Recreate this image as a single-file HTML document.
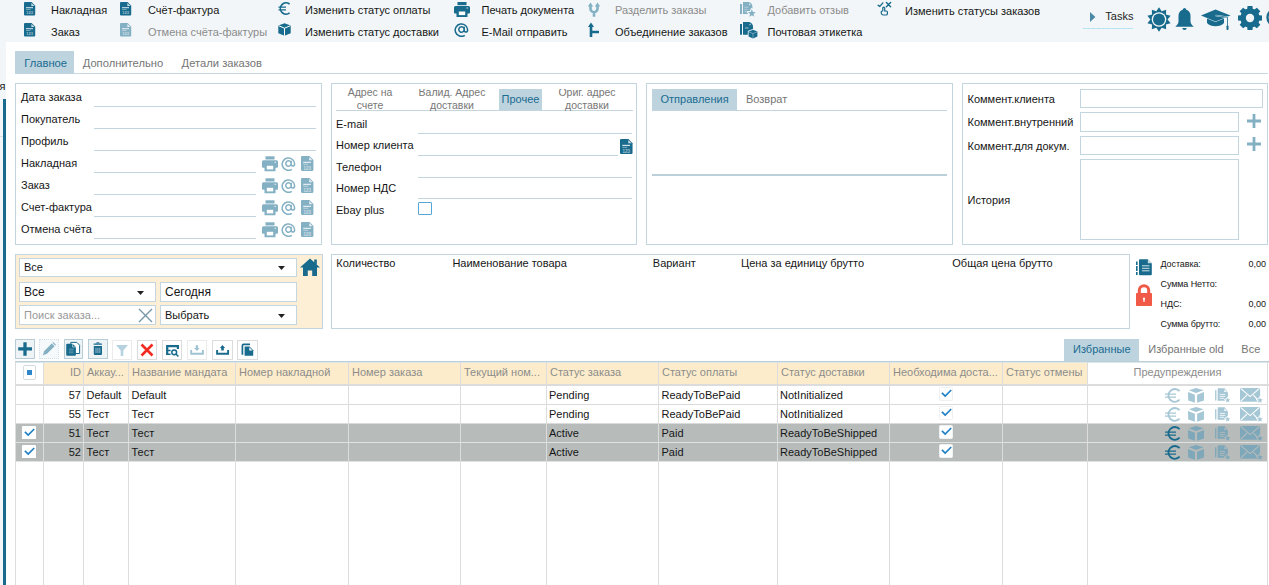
<!DOCTYPE html><html><head><meta charset="utf-8"><style>
html,body{margin:0;padding:0;}
body{width:1269px;height:585px;overflow:hidden;position:relative;background:#f2f6f8;font-family:"Liberation Sans",sans-serif;}
.t{position:absolute;white-space:nowrap;}
svg{display:block;}
</style></head><body><svg style="position:absolute;left:24px;top:1.8px" width="12" height="14" viewBox="0 0 12 14"><path d="M1 0H7.6L11.2 3.7V12.5a1 1 0 0 1-1 1H1a1 1 0 0 1-1-1V1a1 1 0 0 1 1-1z" fill="#186b8d"/><path d="M7.4 0.9V3.9H10.4z" fill="#fff" opacity="0.8"/><rect x="2" y="5.2" width="7" height="1" fill="#fff" opacity="0.85"/><rect x="2" y="7" width="4.5" height="0.8" fill="#fff" opacity="0.5"/><text x="5.6" y="12.3" font-size="4" font-family="Liberation Sans" font-weight="bold" fill="#fff" fill-opacity="0.6" text-anchor="middle">123</text></svg><div class="t" style="left:51px;top:4.69px;font-size:11px;line-height:11px;color:#161616;">Накладная</div><svg style="position:absolute;left:24px;top:23px" width="12" height="14" viewBox="0 0 12 14"><path d="M1 0H7.6L11.2 3.7V12.5a1 1 0 0 1-1 1H1a1 1 0 0 1-1-1V1a1 1 0 0 1 1-1z" fill="#186b8d"/><path d="M7.4 0.9V3.9H10.4z" fill="#fff" opacity="0.8"/><rect x="2" y="5.2" width="7" height="1" fill="#fff" opacity="0.85"/><rect x="2" y="7" width="4.5" height="0.8" fill="#fff" opacity="0.5"/><text x="5.6" y="12.3" font-size="4" font-family="Liberation Sans" font-weight="bold" fill="#fff" fill-opacity="0.6" text-anchor="middle">123</text></svg><div class="t" style="left:51px;top:27.19px;font-size:11px;line-height:11px;color:#161616;">Заказ</div><svg style="position:absolute;left:120px;top:2px" width="12" height="14" viewBox="0 0 12 14"><path d="M1 0H7.6L11.2 3.7V12.5a1 1 0 0 1-1 1H1a1 1 0 0 1-1-1V1a1 1 0 0 1 1-1z" fill="#186b8d"/><path d="M7.4 0.9V3.9H10.4z" fill="#fff" opacity="0.8"/><rect x="2" y="5.2" width="7" height="1" fill="#fff" opacity="0.85"/><rect x="2" y="7" width="4.5" height="0.8" fill="#fff" opacity="0.5"/><text x="5.6" y="12.3" font-size="4" font-family="Liberation Sans" font-weight="bold" fill="#fff" fill-opacity="0.6" text-anchor="middle">123</text></svg><div class="t" style="left:148px;top:4.69px;font-size:11px;line-height:11px;color:#161616;">Счёт-фактура</div><svg style="position:absolute;left:120px;top:23px" width="12" height="14" viewBox="0 0 12 14"><path d="M1 0H7.6L11.2 3.7V12.5a1 1 0 0 1-1 1H1a1 1 0 0 1-1-1V1a1 1 0 0 1 1-1z" fill="#84b0c4"/><path d="M7.4 0.9V3.9H10.4z" fill="#fff" opacity="0.8"/><rect x="2" y="5.2" width="7" height="1" fill="#fff" opacity="0.85"/><rect x="2" y="7" width="4.5" height="0.8" fill="#fff" opacity="0.5"/><text x="5.6" y="12.3" font-size="4" font-family="Liberation Sans" font-weight="bold" fill="#fff" fill-opacity="0.6" text-anchor="middle">123</text></svg><div class="t" style="left:148px;top:27.19px;font-size:11px;line-height:11px;color:#8c8c8c;">Отмена счёта-фактуры</div><svg style="position:absolute;left:278px;top:2px" width="13" height="13" viewBox="0 0 13 13"><path d="M11.6 2.2A5.6 5.6 0 1 0 11.6 10.8" fill="none" stroke="#186b8d" stroke-width="1.6"/><path d="M0.5 5.2h7.5M0.5 7.8h7.5" stroke="#186b8d" stroke-width="1.3"/></svg><div class="t" style="left:305px;top:4.69px;font-size:11px;line-height:11px;color:#161616;">Изменить статус оплаты</div><svg style="position:absolute;left:278px;top:23px" width="13" height="13" viewBox="0 0 13 13"><path d="M6.5 0.3L12.7 2.6V10.3L6.5 12.8L0.3 10.3V2.6Z" fill="#186b8d"/><path d="M0.6 2.7L6.5 5.2L12.4 2.7M6.5 5.2V12.8" fill="none" stroke="#fff" stroke-width="1"/></svg><div class="t" style="left:305px;top:27.19px;font-size:11px;line-height:11px;color:#161616;">Изменить статус доставки</div><svg style="position:absolute;left:454px;top:2px" width="16" height="15" viewBox="0 0 16 15"><rect x="3.5" y="0" width="9" height="3.2" fill="#186b8d"/><path d="M1.5 4h13a1.5 1.5 0 0 1 1.5 1.5v5a1 1 0 0 1-1 1h-1.5v3.5h-11v-3.5h-1.5a1 1 0 0 1-1-1v-5a1.5 1.5 0 0 1 1.5-1.5z" fill="#186b8d"/><rect x="4.8" y="9.5" width="6.4" height="3.6" fill="#fff"/><rect x="12.5" y="5.5" width="1.6" height="1" fill="#fff" opacity="0.8"/></svg><div class="t" style="left:481.5px;top:4.69px;font-size:11px;line-height:11px;color:#161616;">Печать документа</div><svg style="position:absolute;left:454px;top:22px" width="15" height="15" viewBox="0 0 15 15"><path d="M10.2 7.5a2.7 2.7 0 1 1 0-0.1 M10.2 4.8v3.4a1.7 1.7 0 0 0 3.4 0.2A6.2 6.2 0 1 0 10.8 13.3" fill="none" stroke="#186b8d" stroke-width="1.5"/></svg><div class="t" style="left:481.5px;top:27.19px;font-size:11px;line-height:11px;color:#161616;">E-Mail отправить</div><svg style="position:absolute;left:588px;top:2px" width="12" height="15" viewBox="0 0 12 15"><path d="M2.5 3.8v2.9a3.5 3.5 0 0 0 3.5 3.5a3.5 3.5 0 0 0 3.5-3.5v-2.9M6 9.5v5.3" fill="none" stroke="#84b0c4" stroke-width="2.6"/><path d="M-0.2 4.6L2.5 0.5L5.2 4.6ZM6.8 4.6L9.5 0.5L12.2 4.6Z" fill="#84b0c4"/></svg><div class="t" style="left:615px;top:4.69px;font-size:11px;line-height:11px;color:#8c8c8c;">Разделить заказы</div><svg style="position:absolute;left:588px;top:22px" width="11" height="15" viewBox="0 0 11 15"><path d="M3 4v11M3 10h8" fill="none" stroke="#186b8d" stroke-width="2.6"/><path d="M0 5L3 0.5L6 5Z" fill="#186b8d"/></svg><div class="t" style="left:615px;top:27.19px;font-size:11px;line-height:11px;color:#161616;">Объединение заказов</div><svg style="position:absolute;left:738px;top:0px" width="20" height="20" viewBox="0 0 20 20"><rect x="2" y="4" width="2" height="10" fill="#84b0c4"/><path d="M5 2H11.2Q14.4 3.6 14.4 6V14H5Z" fill="#84b0c4"/><circle cx="11.6" cy="4.4" r="0.8" fill="#fff" opacity="0.7"/><path d="M6.3 7.3h4M6.3 9.4h3M6.3 11.5h2.5" stroke="#fff" stroke-width="0.8" opacity="0.45"/><polygon points="13.85,9.30 14.93,11.91 17.75,12.13 15.60,13.97 16.26,16.72 13.85,15.25 11.44,16.72 12.10,13.97 9.95,12.13 12.77,11.91" fill="#f2f6f8" stroke="#f2f6f8" stroke-width="2.4" stroke-linejoin="round"/><polygon points="13.85,9.30 14.93,11.91 17.75,12.13 15.60,13.97 16.26,16.72 13.85,15.25 11.44,16.72 12.10,13.97 9.95,12.13 12.77,11.91" fill="#84b0c4"/></svg><div class="t" style="left:767.5px;top:4.69px;font-size:11px;line-height:11px;color:#8c8c8c;">Добавить отзыв</div><svg style="position:absolute;left:738px;top:20px" width="20" height="20" viewBox="0 0 20 20"><rect x="2" y="4" width="2" height="10.7" fill="#186b8d"/><path d="M5 2H11.5Q15 3.6 15 6.5V14.7H5Z" fill="#186b8d"/><circle cx="12" cy="4.6" r="0.8" fill="#fff" opacity="0.6"/><rect x="7" y="7.2" width="3.6" height="1.6" fill="#fff" opacity="0.35"/><path d="M15 9.8L19.4 11.6V16.6L15 18.6L10.6 16.6V11.6Z" fill="#186b8d" stroke="#f2f6f8" stroke-width="1.6" stroke-linejoin="round"/><path d="M15 9.8L19.4 11.6V16.6L15 18.6L10.6 16.6V11.6Z" fill="#186b8d"/><path d="M10.8 11.8L15 13.6L19.2 11.8M15 13.6V18.5" fill="none" stroke="#fff" stroke-width="0.6" opacity="0.6"/></svg><div class="t" style="left:767.5px;top:27.19px;font-size:11px;line-height:11px;color:#161616;">Почтовая этикетка</div><svg style="position:absolute;left:875px;top:0px" width="20" height="20" viewBox="0 0 20 20"><path d="M3.2 5.3L4.8 6.4L7.9 2.9" fill="none" stroke="#186b8d" stroke-width="1.4" stroke-linecap="round"/><path d="M11.4 2.5L15.6 6.7M15.6 2.5L11.4 6.7" fill="none" stroke="#186b8d" stroke-width="1.4" stroke-linecap="round"/><path d="M7.8 11.2V8a0.95 0.95 0 0 1 1.9 0V11H11.3a1.1 1.1 0 0 1 1.1 1.1V13.8a1.2 1.2 0 0 1-1.2 1.2H8.4a2.2 2.2 0 0 1-2.2-2.2V12.4a1.1 1.1 0 0 1 1.6-1.2" fill="none" stroke="#186b8d" stroke-width="1.2"/></svg><div class="t" style="left:905px;top:5.69px;font-size:11px;line-height:11px;color:#161616;">Изменить статусы заказов</div><svg style="position:absolute;left:1089.7px;top:12px" width="6" height="10" viewBox="0 0 6 10"><path d="M0 0L5.4 5L0 10Z" fill="#4a8aa6"/></svg><div class="t" style="left:1105.3px;top:10.89px;font-size:11px;line-height:11px;color:#1f1f1f;">Tasks</div><div style="position:absolute;left:1083px;top:28px;width:50px;height:1px;background:repeating-linear-gradient(90deg,#b9d9e3 0 1px,#b8e8f8 1px 5px)"></div><svg style="position:absolute;left:1146.5px;top:6.5px" width="24" height="25" viewBox="0 0 24 25"><polygon points="12.00,0.30 14.66,4.32 19.17,2.63 18.96,7.45 23.60,8.73 20.60,12.50 23.60,16.27 18.96,17.55 19.17,22.37 14.66,20.68 12.00,24.70 9.34,20.68 4.83,22.37 5.04,17.55 0.40,16.27 3.40,12.50 0.40,8.73 5.04,7.45 4.83,2.63 9.34,4.32" fill="#186b8d"/><circle cx="12" cy="12.5" r="7.6" fill="#186b8d"/><circle cx="12" cy="12.5" r="7.3" fill="#f2f6f8"/><circle cx="12" cy="12.5" r="6.0" fill="#186b8d"/></svg><svg style="position:absolute;left:1175px;top:8px" width="19" height="22" viewBox="0 0 19 22"><circle cx="9.5" cy="1.6" r="1.6" fill="#186b8d"/><path d="M9.5 1.5c-4 0-6 3-6 6.5v5.5c0 2-1.5 3.5-3.2 5.2h18.4c-1.7-1.7-3.2-3.2-3.2-5.2v-5.5c0-3.5-2-6.5-6-6.5z" fill="#186b8d"/><path d="M7.3 20h4.4a2.2 2 0 0 1-4.4 0z" fill="#186b8d"/></svg><svg style="position:absolute;left:1200.5px;top:9px" width="30" height="21" viewBox="0 0 30 21"><path d="M14.5 0.5L29.5 6.5L14.5 12.5L0 6.5Z" fill="#186b8d"/><path d="M6 9.5v4.5c2 2.5 5 3.2 8.5 3.2s6.5-0.7 8.5-3.2v-4.5l-8.5 3.6z" fill="#186b8d"/><path d="M14.5 6.5L26.5 8.2V17" fill="none" stroke="#f2f6f8" stroke-width="1.6"/><path d="M14.5 6.5L26.5 8.2V17" fill="none" stroke="#186b8d" stroke-width="0.8"/><rect x="25.5" y="16.5" width="2" height="4.5" rx="0.8" fill="#186b8d"/></svg><svg style="position:absolute;left:1238px;top:5.5px" width="24" height="24" viewBox="0 0 24 24"><polygon points="21.08,9.19 24.15,9.54 24.15,14.46 21.08,14.81 20.40,16.43 22.34,18.85 18.85,22.34 16.43,20.40 14.81,21.08 14.46,24.15 9.54,24.15 9.19,21.08 7.57,20.40 5.15,22.34 1.66,18.85 3.60,16.43 2.92,14.81 -0.15,14.46 -0.15,9.54 2.92,9.19 3.60,7.57 1.66,5.15 5.15,1.66 7.57,3.60 9.19,2.92 9.54,-0.15 14.46,-0.15 14.81,2.92 16.43,3.60 18.85,1.66 22.34,5.15 20.40,7.57" fill="#186b8d"/><circle cx="12" cy="12" r="9.6" fill="#186b8d"/><circle cx="12" cy="12" r="4.2" fill="#f2f6f8"/></svg><svg style="position:absolute;left:1266.3px;top:8px" width="3" height="20" viewBox="0 0 3 20"><circle cx="10" cy="9.5" r="8.5" fill="none" stroke="#186b8d" stroke-width="2.4"/></svg><div class="t" style="left:-0.5px;top:80.69px;font-size:11px;line-height:11px;color:#161616;">я</div><div style="position:absolute;left:0px;top:136px;width:6px;height:1px;background:#d8dfe3"></div><div style="position:absolute;left:3px;top:99px;width:3px;height:500px;background:#186b8d"></div><div style="position:absolute;left:6px;top:42px;width:1263px;height:543px;background:#fff"></div><div style="position:absolute;left:15px;top:51px;width:59px;height:23px;background:#bdd3dd"></div><div style="position:absolute;left:74px;top:73px;width:1194px;height:1px;background:#c6d8e0"></div><div class="t" style="left:24.3px;top:57.52px;font-size:11.2px;line-height:11.2px;color:#1a6b92;">Главное</div><div class="t" style="left:82.7px;top:57.52px;font-size:11.2px;line-height:11.2px;color:#757575;">Дополнительно</div><div class="t" style="left:181.6px;top:57.52px;font-size:11.2px;line-height:11.2px;color:#757575;">Детали заказов</div><div style="position:absolute;left:15px;top:83px;width:307px;height:162px;box-sizing:border-box;border:1px solid #c3d6df;background:#fff"></div><div class="t" style="left:21px;top:92.19px;font-size:11px;line-height:11px;color:#161616;">Дата заказа</div><div style="position:absolute;left:94px;top:106px;width:222px;height:1px;background:#c3d6df"></div><div class="t" style="left:21px;top:114.19px;font-size:11px;line-height:11px;color:#161616;">Покупатель</div><div style="position:absolute;left:94px;top:128px;width:222px;height:1px;background:#c3d6df"></div><div class="t" style="left:21px;top:136.19px;font-size:11px;line-height:11px;color:#161616;">Профиль</div><div style="position:absolute;left:94px;top:150px;width:222px;height:1px;background:#c3d6df"></div><div class="t" style="left:21px;top:158.19px;font-size:11px;line-height:11px;color:#161616;">Накладная</div><div style="position:absolute;left:94px;top:172px;width:162px;height:1px;background:#c3d6df"></div><svg style="position:absolute;left:262px;top:156.2px" width="16" height="15.6" viewBox="0 0 16 15"><rect x="3.5" y="0" width="9" height="3.2" fill="#84b0c4"/><path d="M1.5 4h13a1.5 1.5 0 0 1 1.5 1.5v5a1 1 0 0 1-1 1h-1.5v3.5h-11v-3.5h-1.5a1 1 0 0 1-1-1v-5a1.5 1.5 0 0 1 1.5-1.5z" fill="#84b0c4"/><rect x="4.8" y="9.5" width="6.4" height="3.6" fill="#fff"/><rect x="12.5" y="5.5" width="1.6" height="1" fill="#fff" opacity="0.8"/></svg><svg style="position:absolute;left:281px;top:156px" width="15" height="15" viewBox="0 0 15 15"><path d="M10.2 7.5a2.7 2.7 0 1 1 0-0.1 M10.2 4.8v3.4a1.7 1.7 0 0 0 3.4 0.2A6.2 6.2 0 1 0 10.8 13.3" fill="none" stroke="#84b0c4" stroke-width="1.5"/></svg><svg style="position:absolute;left:301px;top:156.2px" width="13.32" height="15.540000000000001" viewBox="0 0 12 14"><path d="M1 0H7.6L11.2 3.7V12.5a1 1 0 0 1-1 1H1a1 1 0 0 1-1-1V1a1 1 0 0 1 1-1z" fill="#84b0c4"/><path d="M7.4 0.9V3.9H10.4z" fill="#fff" opacity="0.8"/><rect x="2" y="5.2" width="7" height="1" fill="#fff" opacity="0.85"/><rect x="2" y="7" width="4.5" height="0.8" fill="#fff" opacity="0.5"/><text x="5.6" y="12.3" font-size="4" font-family="Liberation Sans" font-weight="bold" fill="#fff" fill-opacity="0.6" text-anchor="middle">123</text></svg><div class="t" style="left:21px;top:180.19px;font-size:11px;line-height:11px;color:#161616;">Заказ</div><div style="position:absolute;left:94px;top:194px;width:162px;height:1px;background:#c3d6df"></div><svg style="position:absolute;left:262px;top:178.2px" width="16" height="15.6" viewBox="0 0 16 15"><rect x="3.5" y="0" width="9" height="3.2" fill="#84b0c4"/><path d="M1.5 4h13a1.5 1.5 0 0 1 1.5 1.5v5a1 1 0 0 1-1 1h-1.5v3.5h-11v-3.5h-1.5a1 1 0 0 1-1-1v-5a1.5 1.5 0 0 1 1.5-1.5z" fill="#84b0c4"/><rect x="4.8" y="9.5" width="6.4" height="3.6" fill="#fff"/><rect x="12.5" y="5.5" width="1.6" height="1" fill="#fff" opacity="0.8"/></svg><svg style="position:absolute;left:281px;top:178px" width="15" height="15" viewBox="0 0 15 15"><path d="M10.2 7.5a2.7 2.7 0 1 1 0-0.1 M10.2 4.8v3.4a1.7 1.7 0 0 0 3.4 0.2A6.2 6.2 0 1 0 10.8 13.3" fill="none" stroke="#84b0c4" stroke-width="1.5"/></svg><svg style="position:absolute;left:301px;top:178.2px" width="13.32" height="15.540000000000001" viewBox="0 0 12 14"><path d="M1 0H7.6L11.2 3.7V12.5a1 1 0 0 1-1 1H1a1 1 0 0 1-1-1V1a1 1 0 0 1 1-1z" fill="#84b0c4"/><path d="M7.4 0.9V3.9H10.4z" fill="#fff" opacity="0.8"/><rect x="2" y="5.2" width="7" height="1" fill="#fff" opacity="0.85"/><rect x="2" y="7" width="4.5" height="0.8" fill="#fff" opacity="0.5"/><text x="5.6" y="12.3" font-size="4" font-family="Liberation Sans" font-weight="bold" fill="#fff" fill-opacity="0.6" text-anchor="middle">123</text></svg><div class="t" style="left:21px;top:202.19px;font-size:11px;line-height:11px;color:#161616;">Счет-фактура</div><div style="position:absolute;left:94px;top:216px;width:162px;height:1px;background:#c3d6df"></div><svg style="position:absolute;left:262px;top:200.2px" width="16" height="15.6" viewBox="0 0 16 15"><rect x="3.5" y="0" width="9" height="3.2" fill="#84b0c4"/><path d="M1.5 4h13a1.5 1.5 0 0 1 1.5 1.5v5a1 1 0 0 1-1 1h-1.5v3.5h-11v-3.5h-1.5a1 1 0 0 1-1-1v-5a1.5 1.5 0 0 1 1.5-1.5z" fill="#84b0c4"/><rect x="4.8" y="9.5" width="6.4" height="3.6" fill="#fff"/><rect x="12.5" y="5.5" width="1.6" height="1" fill="#fff" opacity="0.8"/></svg><svg style="position:absolute;left:281px;top:200px" width="15" height="15" viewBox="0 0 15 15"><path d="M10.2 7.5a2.7 2.7 0 1 1 0-0.1 M10.2 4.8v3.4a1.7 1.7 0 0 0 3.4 0.2A6.2 6.2 0 1 0 10.8 13.3" fill="none" stroke="#84b0c4" stroke-width="1.5"/></svg><svg style="position:absolute;left:301px;top:200.2px" width="13.32" height="15.540000000000001" viewBox="0 0 12 14"><path d="M1 0H7.6L11.2 3.7V12.5a1 1 0 0 1-1 1H1a1 1 0 0 1-1-1V1a1 1 0 0 1 1-1z" fill="#84b0c4"/><path d="M7.4 0.9V3.9H10.4z" fill="#fff" opacity="0.8"/><rect x="2" y="5.2" width="7" height="1" fill="#fff" opacity="0.85"/><rect x="2" y="7" width="4.5" height="0.8" fill="#fff" opacity="0.5"/><text x="5.6" y="12.3" font-size="4" font-family="Liberation Sans" font-weight="bold" fill="#fff" fill-opacity="0.6" text-anchor="middle">123</text></svg><div class="t" style="left:21px;top:224.19px;font-size:11px;line-height:11px;color:#161616;">Отмена счёта</div><div style="position:absolute;left:94px;top:238px;width:162px;height:1px;background:#c3d6df"></div><svg style="position:absolute;left:262px;top:222.2px" width="16" height="15.6" viewBox="0 0 16 15"><rect x="3.5" y="0" width="9" height="3.2" fill="#84b0c4"/><path d="M1.5 4h13a1.5 1.5 0 0 1 1.5 1.5v5a1 1 0 0 1-1 1h-1.5v3.5h-11v-3.5h-1.5a1 1 0 0 1-1-1v-5a1.5 1.5 0 0 1 1.5-1.5z" fill="#84b0c4"/><rect x="4.8" y="9.5" width="6.4" height="3.6" fill="#fff"/><rect x="12.5" y="5.5" width="1.6" height="1" fill="#fff" opacity="0.8"/></svg><svg style="position:absolute;left:281px;top:222px" width="15" height="15" viewBox="0 0 15 15"><path d="M10.2 7.5a2.7 2.7 0 1 1 0-0.1 M10.2 4.8v3.4a1.7 1.7 0 0 0 3.4 0.2A6.2 6.2 0 1 0 10.8 13.3" fill="none" stroke="#84b0c4" stroke-width="1.5"/></svg><svg style="position:absolute;left:301px;top:222.2px" width="13.32" height="15.540000000000001" viewBox="0 0 12 14"><path d="M1 0H7.6L11.2 3.7V12.5a1 1 0 0 1-1 1H1a1 1 0 0 1-1-1V1a1 1 0 0 1 1-1z" fill="#84b0c4"/><path d="M7.4 0.9V3.9H10.4z" fill="#fff" opacity="0.8"/><rect x="2" y="5.2" width="7" height="1" fill="#fff" opacity="0.85"/><rect x="2" y="7" width="4.5" height="0.8" fill="#fff" opacity="0.5"/><text x="5.6" y="12.3" font-size="4" font-family="Liberation Sans" font-weight="bold" fill="#fff" fill-opacity="0.6" text-anchor="middle">123</text></svg><div style="position:absolute;left:331px;top:83px;width:306px;height:162px;box-sizing:border-box;border:1px solid #c3d6df;background:#fff"></div><div style="position:absolute;left:499px;top:89px;width:43px;height:21.5px;background:#bdd3dd"></div><div style="position:absolute;left:335.5px;top:110px;width:297px;height:1px;background:#c3d6df"></div><div class="t" style="left:270.0px;width:200px;text-align:center;top:87.11px;font-size:10.5px;line-height:10.5px;color:#777;">Адрес на</div><div class="t" style="left:270.0px;width:200px;text-align:center;top:99.61px;font-size:10.5px;line-height:10.5px;color:#777;">счете</div><div style="position:absolute;left:340px;top:88.5px;width:300px;height:30px;overflow:hidden"><div class="t" style="left:12.0px;width:200px;text-align:center;top:-1.39px;font-size:10.5px;line-height:10.5px;color:#777;">Валид. Адрес</div><div class="t" style="left:12.0px;width:200px;text-align:center;top:11.11px;font-size:10.5px;line-height:10.5px;color:#777;">доставки</div><div class="t" style="left:147.0px;width:200px;text-align:center;top:-1.39px;font-size:10.5px;line-height:10.5px;color:#777;">Ориг. адрес</div><div class="t" style="left:147.0px;width:200px;text-align:center;top:11.11px;font-size:10.5px;line-height:10.5px;color:#777;">доставки</div></div><div class="t" style="left:420.5px;width:200px;text-align:center;top:93.99px;font-size:11px;line-height:11px;color:#1a6b92;">Прочее</div><div class="t" style="left:336px;top:118.69px;font-size:11px;line-height:11px;color:#161616;">E-mail</div><div style="position:absolute;left:418px;top:133px;width:214px;height:1px;background:#c3d6df"></div><div class="t" style="left:336px;top:140.29px;font-size:11px;line-height:11px;color:#161616;">Номер клиента</div><div style="position:absolute;left:418px;top:155px;width:199.5px;height:1px;background:#c3d6df"></div><div class="t" style="left:336px;top:161.89px;font-size:11px;line-height:11px;color:#161616;">Телефон</div><div style="position:absolute;left:418px;top:177px;width:214px;height:1px;background:#c3d6df"></div><div class="t" style="left:336px;top:183.49px;font-size:11px;line-height:11px;color:#161616;">Номер НДС</div><div style="position:absolute;left:418px;top:198px;width:214px;height:1px;background:#c3d6df"></div><div class="t" style="left:336px;top:205.09px;font-size:11px;line-height:11px;color:#161616;">Ebay plus</div><svg style="position:absolute;left:619.7px;top:139px" width="13.440000000000001" height="15.680000000000001" viewBox="0 0 12 14"><path d="M1 0H7.6L11.2 3.7V12.5a1 1 0 0 1-1 1H1a1 1 0 0 1-1-1V1a1 1 0 0 1 1-1z" fill="#186b8d"/><path d="M7.4 0.9V3.9H10.4z" fill="#fff" opacity="0.8"/><rect x="2" y="5.2" width="7" height="1" fill="#fff" opacity="0.85"/><rect x="2" y="7" width="4.5" height="0.8" fill="#fff" opacity="0.5"/><text x="5.6" y="12.3" font-size="4" font-family="Liberation Sans" font-weight="bold" fill="#fff" fill-opacity="0.6" text-anchor="middle">123</text></svg><div style="position:absolute;left:418px;top:202px;width:14px;height:13px;box-sizing:border-box;border:1px solid #55a6d8;border-radius:1px;background:#fff"></div><div style="position:absolute;left:646px;top:83px;width:307px;height:162px;box-sizing:border-box;border:1px solid #c3d6df;background:#fff"></div><div style="position:absolute;left:652px;top:89px;width:85px;height:21.5px;background:#bdd3dd"></div><div style="position:absolute;left:652px;top:110px;width:295px;height:1px;background:#c3d6df"></div><div class="t" style="left:660.5px;top:94.09px;font-size:11px;line-height:11px;color:#1a6b92;">Отправления</div><div class="t" style="left:746px;top:94.09px;font-size:11px;line-height:11px;color:#757575;">Возврат</div><div style="position:absolute;left:652px;top:174px;width:295px;height:2px;background:#bcd0da"></div><div style="position:absolute;left:962px;top:83px;width:306px;height:162px;box-sizing:border-box;border:1px solid #c3d6df;background:#fff"></div><div class="t" style="left:967.5px;top:93.89px;font-size:11px;line-height:11px;color:#161616;">Коммент.клиента</div><div class="t" style="left:967.5px;top:117.39px;font-size:11px;line-height:11px;color:#161616;">Коммент.внутренний</div><div class="t" style="left:967.5px;top:140.89px;font-size:11px;line-height:11px;color:#161616;">Коммент.для докум.</div><div class="t" style="left:967.5px;top:195.19px;font-size:11px;line-height:11px;color:#161616;">История</div><div style="position:absolute;left:1080px;top:89px;width:183px;height:19px;box-sizing:border-box;border:1px solid #c3d6df;background:#fff"></div><div style="position:absolute;left:1080px;top:112px;width:159px;height:20px;box-sizing:border-box;border:1px solid #c3d6df;background:#fff"></div><div style="position:absolute;left:1080px;top:135.5px;width:159px;height:19.5px;box-sizing:border-box;border:1px solid #c3d6df;background:#fff"></div><div style="position:absolute;left:1080px;top:159px;width:159px;height:81px;box-sizing:border-box;border:1px solid #c3d6df;background:#fff"></div><svg style="position:absolute;left:1247px;top:114.3px" width="14" height="14" viewBox="0 0 14 14"><path d="M7.0 0V14M0 7.0H14" stroke="#84b0c4" stroke-width="2.8"/></svg><svg style="position:absolute;left:1247px;top:137.3px" width="14" height="14" viewBox="0 0 14 14"><path d="M7.0 0V14M0 7.0H14" stroke="#84b0c4" stroke-width="2.8"/></svg><div style="position:absolute;left:15px;top:254px;width:308px;height:75px;box-sizing:border-box;border:1px solid #c3d6df;background:#fdeed6"></div><div style="position:absolute;left:19px;top:258px;width:278px;height:19px;box-sizing:border-box;border:1px solid #c3d6df;background:#fff"></div><div class="t" style="left:24px;top:262.39px;font-size:11px;line-height:11px;color:#161616;">Все</div><svg style="position:absolute;left:278px;top:266.0px" width="7" height="4" viewBox="0 0 7 4"><path d="M0 0H7L3.5 4Z" fill="#222"/></svg><svg style="position:absolute;left:300px;top:258px" width="20" height="18" viewBox="0 0 20 18"><path d="M10 0.5L20 9.5H17V18H12.2V12.5H7.8V18H3V9.5H0Z" fill="#186b8d"/><rect x="14.2" y="1.5" width="2.6" height="5" fill="#186b8d"/></svg><div style="position:absolute;left:19px;top:282px;width:137px;height:20px;box-sizing:border-box;border:1px solid #c3d6df;background:#fff"></div><div class="t" style="left:24px;top:286.04px;font-size:12px;line-height:12px;color:#161616;">Все</div><svg style="position:absolute;left:137px;top:290.5px" width="7" height="4" viewBox="0 0 7 4"><path d="M0 0H7L3.5 4Z" fill="#222"/></svg><div style="position:absolute;left:160px;top:282px;width:137px;height:20px;box-sizing:border-box;border:1px solid #c3d6df;background:#fff"></div><div class="t" style="left:165px;top:286.04px;font-size:12px;line-height:12px;color:#161616;">Сегодня</div><div style="position:absolute;left:19px;top:305px;width:137px;height:20px;box-sizing:border-box;border:1px solid #c3d6df;background:#fff"></div><div class="t" style="left:24px;top:309.89px;font-size:11px;line-height:11px;color:#999;">Поиск заказа...</div><svg style="position:absolute;left:138px;top:307.5px" width="15" height="15" viewBox="0 0 15 15"><path d="M1 1L14 14M14 1L1 14" stroke="#7497aa" stroke-width="1.4"/></svg><div style="position:absolute;left:160px;top:305px;width:137px;height:20px;box-sizing:border-box;border:1px solid #c3d6df;background:#fff"></div><div class="t" style="left:165px;top:309.89px;font-size:11px;line-height:11px;color:#161616;">Выбрать</div><svg style="position:absolute;left:278px;top:313.5px" width="7" height="4" viewBox="0 0 7 4"><path d="M0 0H7L3.5 4Z" fill="#222"/></svg><div style="position:absolute;left:331px;top:254px;width:799px;height:75px;box-sizing:border-box;border:1px solid #c3d6df;background:#fff"></div><div class="t" style="left:336.3px;top:257.69px;font-size:11px;line-height:11px;color:#161616;">Количество</div><div class="t" style="left:452.4px;top:257.69px;font-size:11px;line-height:11px;color:#161616;">Наименование товара</div><div class="t" style="left:652.8px;top:257.69px;font-size:11px;line-height:11px;color:#161616;">Вариант</div><div class="t" style="left:741px;top:257.69px;font-size:11px;line-height:11px;color:#161616;">Цена за единицу брутто</div><div class="t" style="left:952.3px;top:257.69px;font-size:11px;line-height:11px;color:#161616;">Общая цена брутто</div><svg style="position:absolute;left:1135.5px;top:258.5px" width="17" height="17" viewBox="0 0 17 17"><path d="M0.8 2.5v3.5M0.8 7v5M0.8 13v3" stroke="#186b8d" stroke-width="1.6"/><path d="M4 0.2h7.8l4 4v11a1 1 0 0 1-1 1h-10.8a1 1 0 0 1-1-1v-14a1 1 0 0 1 1-1z" fill="#186b8d"/><path d="M11.8 0.2v4h4z" fill="#fff" opacity="0.75"/><rect x="6" y="6.3" width="7.5" height="1" fill="#fff" opacity="0.8"/><rect x="6" y="8.8" width="7.5" height="1" fill="#fff" opacity="0.8"/><rect x="6" y="11.3" width="7.5" height="1" fill="#fff" opacity="0.8"/></svg><svg style="position:absolute;left:1135.8px;top:284px" width="16" height="22" viewBox="0 0 16 22"><path d="M3.3 10V6.4a4.7 4.7 0 0 1 9.4 0V10" fill="none" stroke="#f15a47" stroke-width="3"/><rect x="0" y="9" width="16" height="13" rx="0.8" fill="#f15a47"/><circle cx="8" cy="14.6" r="1.1" fill="#fff"/><rect x="7.3" y="14.6" width="1.4" height="3.2" fill="#fff"/></svg><div class="t" style="left:1160.5px;top:260.08px;font-size:9px;line-height:9px;color:#161616;letter-spacing:-0.1px">Доставка:</div><div class="t" style="left:1066px;width:200px;text-align:right;top:260.08px;font-size:9px;line-height:9px;color:#161616;">0,00</div><div class="t" style="left:1160.5px;top:279.58px;font-size:9px;line-height:9px;color:#161616;letter-spacing:-0.1px">Сумма Нетто:</div><div class="t" style="left:1160.5px;top:299.78px;font-size:9px;line-height:9px;color:#161616;letter-spacing:-0.1px">НДС:</div><div class="t" style="left:1066px;width:200px;text-align:right;top:299.78px;font-size:9px;line-height:9px;color:#161616;">0,00</div><div class="t" style="left:1160.5px;top:319.98px;font-size:9px;line-height:9px;color:#161616;letter-spacing:-0.1px">Сумма брутто:</div><div class="t" style="left:1066px;width:200px;text-align:right;top:319.98px;font-size:9px;line-height:9px;color:#161616;">0,00</div><div style="position:absolute;left:15px;top:339px;width:20px;height:20px;box-sizing:border-box;border:1px solid #b9cdd7;background:#eef3f6"></div><svg style="position:absolute;left:15px;top:339px" width="20" height="20" viewBox="0 0 20 20"><path d="M10 3.2V16.7M3.2 9.95H17" stroke="#186b8d" stroke-width="3.3"/></svg><div style="position:absolute;left:39px;top:339px;width:20px;height:20px;box-sizing:border-box;border:1px dotted #d3e0e7;background:#f6f9fb"></div><svg style="position:absolute;left:39px;top:339px" width="20" height="20" viewBox="0 0 20 20"><path d="M3.8 16.3L5.2 12L12.8 4.4L15.6 7.2L8 14.8Z" fill="#84b0c4"/><path d="M13.8 3.4L16.6 6.2" stroke="#84b0c4" stroke-width="1.1"/></svg><div style="position:absolute;left:64px;top:339px;width:20px;height:20px;box-sizing:border-box;border:1px solid #b9cdd7;background:#eef3f6;width:19px"></div><svg style="position:absolute;left:64px;top:339px" width="20" height="20" viewBox="0 0 20 20"><path d="M6.8 3.4H12.8L15.6 6.2V14.5H6.8Z" fill="#fff" stroke="#186b8d" stroke-width="1"/><path d="M3.2 4.7H8.6L11.9 8V15.7a1 1 0 0 1-1 1H3.2a1 1 0 0 1-1-1V5.7a1 1 0 0 1 1-1z" fill="#186b8d"/><path d="M8.6 4.7V8H11.9" fill="none" stroke="#fff" stroke-width="0.7" opacity="0.8"/><path d="M5 10.2h4.5M5 12h4.5M5 13.8h4.5" stroke="#fff" stroke-width="0.9" opacity="0.35"/></svg><div style="position:absolute;left:88px;top:339px;width:20px;height:20px;box-sizing:border-box;border:1px solid #b9cdd7;background:#eef3f6"></div><svg style="position:absolute;left:88px;top:339px" width="20" height="20" viewBox="0 0 20 20"><path d="M5.8 7H14V15a1 1 0 0 1-1 1H6.8a1 1 0 0 1-1-1z" fill="#186b8d"/><rect x="5.6" y="4.4" width="8.4" height="1.4" rx="0.4" fill="#186b8d"/><path d="M8 4.4a1.9 1.2 0 0 1 3.8 0" fill="#186b8d"/><path d="M8 8.8v5.2M9.9 8.8v5.2M11.8 8.8v5.2" stroke="#9fc2d2" stroke-width="0.9"/></svg><div style="position:absolute;left:112px;top:340px;width:20px;height:20px;box-sizing:border-box;border:1px solid #ebebeb;background:#fff"></div><svg style="position:absolute;left:112px;top:340px" width="20" height="20" viewBox="0 0 20 20"><path d="M4 5H16L11.3 10.5V16H8.7V10.5Z" fill="#b5d2de"/></svg><div style="position:absolute;left:137px;top:340px;width:20px;height:20px;box-sizing:border-box;border:1px solid #dcdcdc;background:#fff"></div><svg style="position:absolute;left:137px;top:340px" width="20" height="20" viewBox="0 0 20 20"><path d="M4.5 4.5L15.5 15.5M15.5 4.5L4.5 15.5" stroke="#f22b22" stroke-width="2.6"/></svg><div style="position:absolute;left:162px;top:340px;width:20px;height:20px;box-sizing:border-box;border:1px solid #dcdcdc;background:#fff"></div><svg style="position:absolute;left:162px;top:340px" width="20" height="20" viewBox="0 0 20 20"><path d="M5.2 15V6.2H15.9V9" fill="none" stroke="#186b8d" stroke-width="2.2"/><path d="M4.2 10.6H8.6M4.2 14.3H8.6" stroke="#186b8d" stroke-width="1.5"/><circle cx="12.2" cy="12.3" r="2.4" fill="none" stroke="#186b8d" stroke-width="1.5"/><path d="M13.9 14L16.4 16.5" stroke="#186b8d" stroke-width="1.5"/></svg><div style="position:absolute;left:187px;top:340px;width:20px;height:20px;box-sizing:border-box;border:1px solid #ebebeb;background:#fff"></div><svg style="position:absolute;left:187px;top:340px" width="20" height="20" viewBox="0 0 20 20"><path d="M4.2 10.1V13.8H15.9V10.1" fill="none" stroke="#9fc3d3" stroke-width="1.9"/><path d="M8.7 5.2H11.1V8H12.7L9.9 10.9L7.1 8H8.7Z" fill="#9fc3d3"/></svg><div style="position:absolute;left:212px;top:340px;width:20px;height:20px;box-sizing:border-box;border:1px solid #dcdcdc;background:#fff;width:20.5px"></div><svg style="position:absolute;left:212px;top:340px" width="20" height="20" viewBox="0 0 20 20"><path d="M5.1 10.1V13.8H16.1V10.1" fill="none" stroke="#186b8d" stroke-width="1.9"/><path d="M9.2 10.6H11.8V8.1H13.1L10.5 5L7.9 8.1H9.2Z" fill="#186b8d"/></svg><div style="position:absolute;left:237px;top:340px;width:20.5px;height:20px;box-sizing:border-box;border:1px solid #dcdcdc;background:#fff"></div><svg style="position:absolute;left:237px;top:340px" width="20.5" height="20" viewBox="0 0 20.5 20"><path d="M5.4 14.8V5.6a1.2 1.2 0 0 1 1.2-1.2H13" fill="none" stroke="#186b8d" stroke-width="1.7"/><path d="M7.6 6.6H12.6L16.2 10.3V15.8H7.6Z" fill="#186b8d"/><path d="M12.3 7.3V10.6H15.5Z" fill="#fff"/></svg><div style="position:absolute;left:1064px;top:339px;width:75px;height:22.5px;background:#bdd3dd"></div><div class="t" style="left:1073px;top:343.69px;font-size:11px;line-height:11px;color:#1a6b92;">Избранные</div><div class="t" style="left:1148.3px;top:343.69px;font-size:11px;line-height:11px;color:#757575;">Избранные old</div><div class="t" style="left:1241.3px;top:343.69px;font-size:11px;line-height:11px;color:#757575;">Все</div><div style="position:absolute;left:15px;top:361px;width:1254px;height:1px;background:#bccfd9"></div><div style="position:absolute;left:15px;top:362px;width:1254px;height:1px;background:#dce7ec"></div><div style="position:absolute;left:43.5px;top:363px;width:1044.0px;height:21px;background:#fdeccb"></div><div style="position:absolute;left:15px;top:383.5px;width:1254px;height:2px;background:#dcdcdc"></div><div style="position:absolute;left:15px;top:423px;width:1253px;height:19px;background:#b7bcbb"></div><div style="position:absolute;left:15px;top:442px;width:1253px;height:19px;background:#b7bcbb"></div><div style="position:absolute;left:15px;top:403.5px;width:1253px;height:1px;background:#dadada"></div><div style="position:absolute;left:15px;top:422.5px;width:1253px;height:1px;background:#dadada"></div><div style="position:absolute;left:15px;top:441.5px;width:1253px;height:1px;background:#dfe2e2"></div><div style="position:absolute;left:15px;top:460.5px;width:1253px;height:1px;background:#dfe2e2"></div><div style="position:absolute;left:14.5px;top:362px;width:1px;height:223px;background:#dcdcdc"></div><div style="position:absolute;left:43.0px;top:362px;width:1px;height:223px;background:#dcdcdc"></div><div style="position:absolute;left:83.0px;top:362px;width:1px;height:223px;background:#dcdcdc"></div><div style="position:absolute;left:128.0px;top:362px;width:1px;height:223px;background:#dcdcdc"></div><div style="position:absolute;left:235.0px;top:362px;width:1px;height:223px;background:#dcdcdc"></div><div style="position:absolute;left:348.0px;top:362px;width:1px;height:223px;background:#dcdcdc"></div><div style="position:absolute;left:460.0px;top:362px;width:1px;height:223px;background:#dcdcdc"></div><div style="position:absolute;left:546.0px;top:362px;width:1px;height:223px;background:#dcdcdc"></div><div style="position:absolute;left:658.0px;top:362px;width:1px;height:223px;background:#dcdcdc"></div><div style="position:absolute;left:777.0px;top:362px;width:1px;height:223px;background:#dcdcdc"></div><div style="position:absolute;left:889.0px;top:362px;width:1px;height:223px;background:#dcdcdc"></div><div style="position:absolute;left:1002.0px;top:362px;width:1px;height:223px;background:#dcdcdc"></div><div style="position:absolute;left:1087.0px;top:362px;width:1px;height:223px;background:#dcdcdc"></div><div style="position:absolute;left:1267.0px;top:362px;width:1px;height:223px;background:#dcdcdc"></div><div class="t" style="left:-119.0px;width:200px;text-align:right;top:367.19px;font-size:11px;line-height:11px;color:#8c8c8c;">ID</div><div class="t" style="left:87.0px;top:367.19px;font-size:11px;line-height:11px;color:#8c8c8c;">Аккау...</div><div class="t" style="left:132.0px;top:367.19px;font-size:11px;line-height:11px;color:#8c8c8c;">Название мандата</div><div class="t" style="left:239.0px;top:367.19px;font-size:11px;line-height:11px;color:#8c8c8c;">Номер накладной</div><div class="t" style="left:352.0px;top:367.19px;font-size:11px;line-height:11px;color:#8c8c8c;">Номер заказа</div><div class="t" style="left:464.0px;top:367.19px;font-size:11px;line-height:11px;color:#8c8c8c;">Текущий ном...</div><div class="t" style="left:550.0px;top:367.19px;font-size:11px;line-height:11px;color:#8c8c8c;">Статус заказа</div><div class="t" style="left:662.0px;top:367.19px;font-size:11px;line-height:11px;color:#8c8c8c;">Статус оплаты</div><div class="t" style="left:781.0px;top:367.19px;font-size:11px;line-height:11px;color:#8c8c8c;">Статус доставки</div><div class="t" style="left:893.0px;top:367.19px;font-size:11px;line-height:11px;color:#8c8c8c;">Необходима доста...</div><div class="t" style="left:1006.0px;top:367.19px;font-size:11px;line-height:11px;color:#8c8c8c;">Статус отмены</div><div class="t" style="left:1077.5px;width:200px;text-align:center;top:367.19px;font-size:11px;line-height:11px;color:#8c8c8c;">Предупреждения</div><div style="position:absolute;left:22.5px;top:365px;width:13.5px;height:14.5px;box-sizing:border-box;border:1px solid #d5dadd;background:#fff;border-radius:2px"></div><div style="position:absolute;left:27px;top:370px;width:5px;height:5px;background:#2f86c8"></div><div class="t" style="left:-119px;width:200px;text-align:right;top:389.69px;font-size:11px;line-height:11px;color:#161616;">57</div><div class="t" style="left:86.5px;top:389.69px;font-size:11px;line-height:11px;color:#161616;">Default</div><div class="t" style="left:131.5px;top:389.69px;font-size:11px;line-height:11px;color:#161616;">Default</div><div class="t" style="left:549px;top:389.69px;font-size:11px;line-height:11px;color:#161616;">Pending</div><div class="t" style="left:661.5px;top:389.69px;font-size:11px;line-height:11px;color:#161616;">ReadyToBePaid</div><div class="t" style="left:780px;top:389.69px;font-size:11px;line-height:11px;color:#161616;">NotInitialized</div><svg style="position:absolute;left:939px;top:387.25px" width="14" height="14" viewBox="0 0 14 14"><rect x="0.5" y="0.5" width="13" height="13" rx="1" fill="#fff" stroke="#eef0f1" stroke-width="1"/><path d="M2.9 5.8L6.2 9L12.2 3" fill="none" stroke="#1f80c6" stroke-width="1.7"/></svg><svg style="position:absolute;left:1160px;top:384px" width="109" height="20" viewBox="0 0 109 20"><path d="M19.6 7.1A6.4 6.4 0 1 0 19.6 15.7" fill="none" stroke="#a6c7d5" stroke-width="1.8"/><path d="M5 10.05H16M5 13.1H16" stroke="#a6c7d5" stroke-width="1.2"/><polygon points="28.8,6.3 36.1,3.9 43.6,6.3 36.1,9.1" fill="#a6c7d5"/><polygon points="28,8.1 34.9,10.8 34.9,18.7 28.2,16.4" fill="#a6c7d5"/><polygon points="37.1,10.8 44,8.1 44,16.4 37.1,18.7" fill="#a6c7d5"/><rect x="55.1" y="6.2" width="1.3" height="10.3" fill="#a6c7d5"/><path d="M57.7 4.2H64.6L67.9 8.4V16.8H57.7Z" fill="#a6c7d5"/><path d="M64.4 5.2L66.8 7.9H64.4Z" fill="#fff"/><path d="M59.7 10.4H65.2M59.7 12.4H65.2M59.7 14.3H64" stroke="#fff" stroke-width="0.8"/><polygon points="67.70,13.60 68.41,15.32 70.27,15.47 68.86,16.68 69.29,18.48 67.70,17.52 66.11,18.48 66.54,16.68 65.13,15.47 66.99,15.32" fill="#fff" stroke="#fff" stroke-width="1.8" stroke-linejoin="round"/><polygon points="67.70,13.60 68.41,15.32 70.27,15.47 68.86,16.68 69.29,18.48 67.70,17.52 66.11,18.48 66.54,16.68 65.13,15.47 66.99,15.32" fill="#a6c7d5"/><rect x="80" y="4" width="20.1" height="13.7" fill="#a6c7d5"/><path d="M80.6 4.3L90.1 12.6L99.5 4.3M80.6 17.3L86.9 11.2M96.9 14.8L93.4 11.2" fill="none" stroke="#fff" stroke-width="1.1"/><polygon points="99.90,13.20 100.72,15.17 102.85,15.34 101.23,16.73 101.72,18.81 99.90,17.70 98.08,18.81 98.57,16.73 96.95,15.34 99.08,15.17" fill="#fff" stroke="#fff" stroke-width="1.8" stroke-linejoin="round"/><polygon points="99.90,13.20 100.72,15.17 102.85,15.34 101.23,16.73 101.72,18.81 99.90,17.70 98.08,18.81 98.57,16.73 96.95,15.34 99.08,15.17" fill="#a6c7d5"/></svg><div class="t" style="left:-119px;width:200px;text-align:right;top:408.69px;font-size:11px;line-height:11px;color:#161616;">55</div><div class="t" style="left:86.5px;top:408.69px;font-size:11px;line-height:11px;color:#161616;">Тест</div><div class="t" style="left:131.5px;top:408.69px;font-size:11px;line-height:11px;color:#161616;">Тест</div><div class="t" style="left:549px;top:408.69px;font-size:11px;line-height:11px;color:#161616;">Pending</div><div class="t" style="left:661.5px;top:408.69px;font-size:11px;line-height:11px;color:#161616;">ReadyToBePaid</div><div class="t" style="left:780px;top:408.69px;font-size:11px;line-height:11px;color:#161616;">NotInitialized</div><svg style="position:absolute;left:939px;top:406.0px" width="14" height="14" viewBox="0 0 14 14"><rect x="0.5" y="0.5" width="13" height="13" rx="1" fill="#fff" stroke="#eef0f1" stroke-width="1"/><path d="M2.9 5.8L6.2 9L12.2 3" fill="none" stroke="#1f80c6" stroke-width="1.7"/></svg><svg style="position:absolute;left:1160px;top:403px" width="109" height="20" viewBox="0 0 109 20"><path d="M19.6 7.1A6.4 6.4 0 1 0 19.6 15.7" fill="none" stroke="#a6c7d5" stroke-width="1.8"/><path d="M5 10.05H16M5 13.1H16" stroke="#a6c7d5" stroke-width="1.2"/><polygon points="28.8,6.3 36.1,3.9 43.6,6.3 36.1,9.1" fill="#a6c7d5"/><polygon points="28,8.1 34.9,10.8 34.9,18.7 28.2,16.4" fill="#a6c7d5"/><polygon points="37.1,10.8 44,8.1 44,16.4 37.1,18.7" fill="#a6c7d5"/><rect x="55.1" y="6.2" width="1.3" height="10.3" fill="#a6c7d5"/><path d="M57.7 4.2H64.6L67.9 8.4V16.8H57.7Z" fill="#a6c7d5"/><path d="M64.4 5.2L66.8 7.9H64.4Z" fill="#fff"/><path d="M59.7 10.4H65.2M59.7 12.4H65.2M59.7 14.3H64" stroke="#fff" stroke-width="0.8"/><polygon points="67.70,13.60 68.41,15.32 70.27,15.47 68.86,16.68 69.29,18.48 67.70,17.52 66.11,18.48 66.54,16.68 65.13,15.47 66.99,15.32" fill="#fff" stroke="#fff" stroke-width="1.8" stroke-linejoin="round"/><polygon points="67.70,13.60 68.41,15.32 70.27,15.47 68.86,16.68 69.29,18.48 67.70,17.52 66.11,18.48 66.54,16.68 65.13,15.47 66.99,15.32" fill="#a6c7d5"/><rect x="80" y="4" width="20.1" height="13.7" fill="#a6c7d5"/><path d="M80.6 4.3L90.1 12.6L99.5 4.3M80.6 17.3L86.9 11.2M96.9 14.8L93.4 11.2" fill="none" stroke="#fff" stroke-width="1.1"/><polygon points="99.90,13.20 100.72,15.17 102.85,15.34 101.23,16.73 101.72,18.81 99.90,17.70 98.08,18.81 98.57,16.73 96.95,15.34 99.08,15.17" fill="#fff" stroke="#fff" stroke-width="1.8" stroke-linejoin="round"/><polygon points="99.90,13.20 100.72,15.17 102.85,15.34 101.23,16.73 101.72,18.81 99.90,17.70 98.08,18.81 98.57,16.73 96.95,15.34 99.08,15.17" fill="#a6c7d5"/></svg><div class="t" style="left:-119px;width:200px;text-align:right;top:427.69px;font-size:11px;line-height:11px;color:#161616;">51</div><div class="t" style="left:86.5px;top:427.69px;font-size:11px;line-height:11px;color:#161616;">Тест</div><div class="t" style="left:131.5px;top:427.69px;font-size:11px;line-height:11px;color:#161616;">Тест</div><div class="t" style="left:549px;top:427.69px;font-size:11px;line-height:11px;color:#161616;">Active</div><div class="t" style="left:661.5px;top:427.69px;font-size:11px;line-height:11px;color:#161616;">Paid</div><div class="t" style="left:780px;top:427.69px;font-size:11px;line-height:11px;color:#161616;">ReadyToBeShipped</div><svg style="position:absolute;left:939px;top:425.0px" width="14" height="14" viewBox="0 0 14 14"><rect x="0.5" y="0.5" width="13" height="13" rx="1" fill="#fff" stroke="#eef0f1" stroke-width="1"/><path d="M2.9 5.8L6.2 9L12.2 3" fill="none" stroke="#1f80c6" stroke-width="1.7"/></svg><svg style="position:absolute;left:22px;top:425.5px" width="14" height="13" viewBox="0 0 14 13"><rect x="0" y="0" width="14" height="14" rx="1" fill="#fff"/><path d="M2.9 5.8L6.2 9L12.2 3" fill="none" stroke="#1f80c6" stroke-width="1.7"/></svg><svg style="position:absolute;left:1160px;top:422px" width="109" height="20" viewBox="0 0 109 20"><path d="M19.6 7.1A6.4 6.4 0 1 0 19.6 15.7" fill="none" stroke="#186b8d" stroke-width="1.8"/><path d="M5 10.05H16M5 13.1H16" stroke="#186b8d" stroke-width="1.2"/><polygon points="28.8,6.3 36.1,3.9 43.6,6.3 36.1,9.1" fill="#7ea7b9"/><polygon points="28,8.1 34.9,10.8 34.9,18.7 28.2,16.4" fill="#7ea7b9"/><polygon points="37.1,10.8 44,8.1 44,16.4 37.1,18.7" fill="#7ea7b9"/><rect x="55.1" y="6.2" width="1.3" height="10.3" fill="#7ea7b9"/><path d="M57.7 4.2H64.6L67.9 8.4V16.8H57.7Z" fill="#7ea7b9"/><path d="M64.4 5.2L66.8 7.9H64.4Z" fill="#b7bcbb"/><path d="M59.7 10.4H65.2M59.7 12.4H65.2M59.7 14.3H64" stroke="#b7bcbb" stroke-width="0.8"/><polygon points="67.70,13.60 68.41,15.32 70.27,15.47 68.86,16.68 69.29,18.48 67.70,17.52 66.11,18.48 66.54,16.68 65.13,15.47 66.99,15.32" fill="#b7bcbb" stroke="#b7bcbb" stroke-width="1.8" stroke-linejoin="round"/><polygon points="67.70,13.60 68.41,15.32 70.27,15.47 68.86,16.68 69.29,18.48 67.70,17.52 66.11,18.48 66.54,16.68 65.13,15.47 66.99,15.32" fill="#7ea7b9"/><rect x="80" y="4" width="20.1" height="13.7" fill="#7ea7b9"/><path d="M80.6 4.3L90.1 12.6L99.5 4.3M80.6 17.3L86.9 11.2M96.9 14.8L93.4 11.2" fill="none" stroke="#b7bcbb" stroke-width="1.1"/><polygon points="99.90,13.20 100.72,15.17 102.85,15.34 101.23,16.73 101.72,18.81 99.90,17.70 98.08,18.81 98.57,16.73 96.95,15.34 99.08,15.17" fill="#b7bcbb" stroke="#b7bcbb" stroke-width="1.8" stroke-linejoin="round"/><polygon points="99.90,13.20 100.72,15.17 102.85,15.34 101.23,16.73 101.72,18.81 99.90,17.70 98.08,18.81 98.57,16.73 96.95,15.34 99.08,15.17" fill="#7ea7b9"/></svg><div class="t" style="left:-119px;width:200px;text-align:right;top:446.69px;font-size:11px;line-height:11px;color:#161616;">52</div><div class="t" style="left:86.5px;top:446.69px;font-size:11px;line-height:11px;color:#161616;">Тест</div><div class="t" style="left:131.5px;top:446.69px;font-size:11px;line-height:11px;color:#161616;">Тест</div><div class="t" style="left:549px;top:446.69px;font-size:11px;line-height:11px;color:#161616;">Active</div><div class="t" style="left:661.5px;top:446.69px;font-size:11px;line-height:11px;color:#161616;">Paid</div><div class="t" style="left:780px;top:446.69px;font-size:11px;line-height:11px;color:#161616;">ReadyToBeShipped</div><svg style="position:absolute;left:939px;top:444.0px" width="14" height="14" viewBox="0 0 14 14"><rect x="0.5" y="0.5" width="13" height="13" rx="1" fill="#fff" stroke="#eef0f1" stroke-width="1"/><path d="M2.9 5.8L6.2 9L12.2 3" fill="none" stroke="#1f80c6" stroke-width="1.7"/></svg><svg style="position:absolute;left:22px;top:444.5px" width="14" height="13" viewBox="0 0 14 13"><rect x="0" y="0" width="14" height="14" rx="1" fill="#fff"/><path d="M2.9 5.8L6.2 9L12.2 3" fill="none" stroke="#1f80c6" stroke-width="1.7"/></svg><svg style="position:absolute;left:1160px;top:441px" width="109" height="20" viewBox="0 0 109 20"><path d="M19.6 7.1A6.4 6.4 0 1 0 19.6 15.7" fill="none" stroke="#186b8d" stroke-width="1.8"/><path d="M5 10.05H16M5 13.1H16" stroke="#186b8d" stroke-width="1.2"/><polygon points="28.8,6.3 36.1,3.9 43.6,6.3 36.1,9.1" fill="#7ea7b9"/><polygon points="28,8.1 34.9,10.8 34.9,18.7 28.2,16.4" fill="#7ea7b9"/><polygon points="37.1,10.8 44,8.1 44,16.4 37.1,18.7" fill="#7ea7b9"/><rect x="55.1" y="6.2" width="1.3" height="10.3" fill="#7ea7b9"/><path d="M57.7 4.2H64.6L67.9 8.4V16.8H57.7Z" fill="#7ea7b9"/><path d="M64.4 5.2L66.8 7.9H64.4Z" fill="#b7bcbb"/><path d="M59.7 10.4H65.2M59.7 12.4H65.2M59.7 14.3H64" stroke="#b7bcbb" stroke-width="0.8"/><polygon points="67.70,13.60 68.41,15.32 70.27,15.47 68.86,16.68 69.29,18.48 67.70,17.52 66.11,18.48 66.54,16.68 65.13,15.47 66.99,15.32" fill="#b7bcbb" stroke="#b7bcbb" stroke-width="1.8" stroke-linejoin="round"/><polygon points="67.70,13.60 68.41,15.32 70.27,15.47 68.86,16.68 69.29,18.48 67.70,17.52 66.11,18.48 66.54,16.68 65.13,15.47 66.99,15.32" fill="#7ea7b9"/><rect x="80" y="4" width="20.1" height="13.7" fill="#7ea7b9"/><path d="M80.6 4.3L90.1 12.6L99.5 4.3M80.6 17.3L86.9 11.2M96.9 14.8L93.4 11.2" fill="none" stroke="#b7bcbb" stroke-width="1.1"/><polygon points="99.90,13.20 100.72,15.17 102.85,15.34 101.23,16.73 101.72,18.81 99.90,17.70 98.08,18.81 98.57,16.73 96.95,15.34 99.08,15.17" fill="#b7bcbb" stroke="#b7bcbb" stroke-width="1.8" stroke-linejoin="round"/><polygon points="99.90,13.20 100.72,15.17 102.85,15.34 101.23,16.73 101.72,18.81 99.90,17.70 98.08,18.81 98.57,16.73 96.95,15.34 99.08,15.17" fill="#7ea7b9"/></svg></body></html>
